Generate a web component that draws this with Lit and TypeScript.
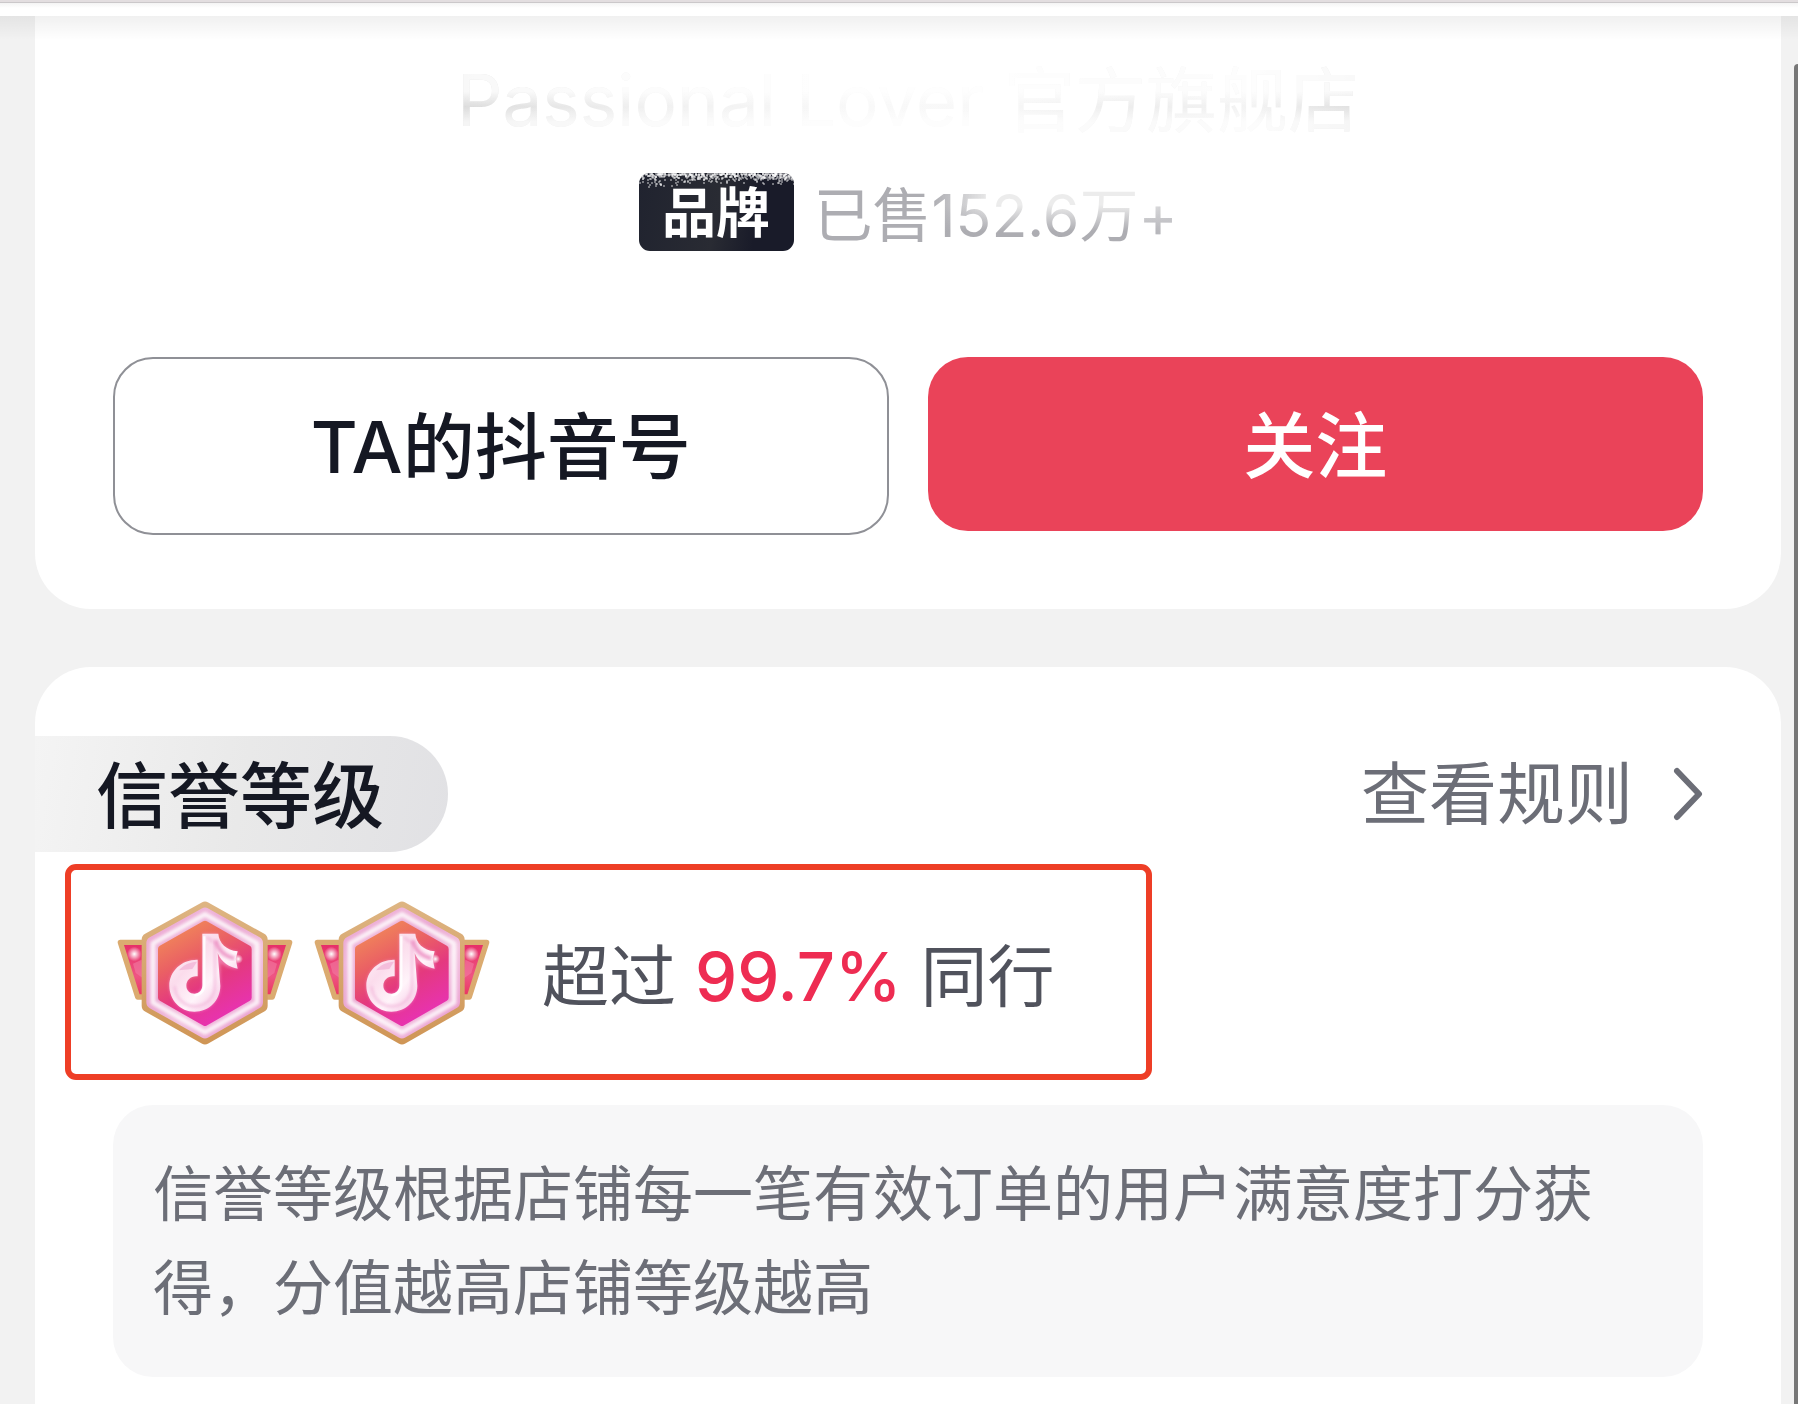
import { LitElement, html, css, svg } from "lit";
import { customElement, property } from "lit/decorators.js";

const FONT = css`Inter, "Noto Sans CJK SC", sans-serif`;

/** Winged hexagonal medal with the music note. */
@customElement("level-medal")
class LevelMedal extends LitElement {
  static styles = css`
    :host { display: block; width: 176px; height: 144px; }
    .medal { display: block; width: 100%; height: 100%; }
  `;
  render() {
    return html`<svg class="medal" viewBox="50 64 528 432" role="img" aria-label="信誉徽章">
      <defs>
        <linearGradient id="gold" gradientUnits="userSpaceOnUse" x1="0" y1="64" x2="0" y2="496">
          <stop offset="0" stop-color="#deb583" /><stop offset="1" stop-color="#cf9555" />
        </linearGradient>
        <linearGradient id="rim" gradientUnits="userSpaceOnUse" x1="150" y1="100" x2="480" y2="460">
          <stop offset="0" stop-color="#eaa2d0" /><stop offset=".22" stop-color="#efb6da" />
          <stop offset=".42" stop-color="#eaa8d2" /><stop offset=".62" stop-color="#f3c4e0" />
          <stop offset=".8" stop-color="#eeb0d8" /><stop offset="1" stop-color="#e78fc6" />
        </linearGradient>
        <linearGradient id="core" x1=".2" y1=".05" x2=".65" y2="1">
          <stop offset="0" stop-color="#f0845a" /><stop offset=".3" stop-color="#ea6064" />
          <stop offset=".6" stop-color="#e4397f" /><stop offset="1" stop-color="#e832b2" />
        </linearGradient>
        <linearGradient id="wing" x1="0" y1="0" x2="0" y2="1">
          <stop offset="0" stop-color="#e62b66" /><stop offset=".6" stop-color="#ee5583" /><stop offset="1" stop-color="#e9315c" />
        </linearGradient>
        <linearGradient id="note" x1="0" y1="0" x2="1" y2="1">
          <stop offset="0" stop-color="#ffffff" /><stop offset=".35" stop-color="#fbdcec" />
          <stop offset=".6" stop-color="#fff4fa" /><stop offset="1" stop-color="#f1a9d6" />
        </linearGradient>
        <radialGradient id="spark"><stop offset="0" stop-color="#fff" /><stop offset="1" stop-color="#fff" stop-opacity="0" /></radialGradient>
        <filter id="soft" x="-10%" y="-10%" width="120%" height="120%"><feGaussianBlur stdDeviation="4" /></filter>
      </defs>
      <g stroke-linejoin="round">
        <path d="M60 188H140V356H112Z" fill="url(#wing)" />
        <path d="M568 188H488V356H516Z" fill="url(#wing)" />
        <path d="M140 188H60L112 352H140M488 188H568L516 352H488" fill="none" stroke="#dbab70" stroke-width="16" />
        <circle cx="102" cy="223" r="22" fill="url(#spark)" />
        <circle cx="522" cy="223" r="22" fill="url(#spark)" />
        <path d="M98 252L124 240L128 296L106 280ZM530 252L504 240L500 296L522 280Z" fill="#f27fa6" opacity=".55" />
        <path d="M314 86L482 180V378L314 474L144 378V180Z" fill="url(#gold)" stroke="url(#gold)" stroke-width="40" />
        <path d="M314 104L468 190V368L314 456L158 368V190Z" fill="url(#rim)" stroke="url(#rim)" stroke-width="40" />
        <path d="M314 104L470 191V369L314 458L158 369V191Z" fill="none" stroke="#fff" stroke-width="15" opacity=".8" filter="url(#soft)" />
        <path d="M314 134L443 208V354L314 428L184 354V208Z" fill="url(#core)" stroke="url(#core)" stroke-width="22" />
        <path d="M306 162H350C356 190 378 212 412 215V267C390 267 374 260 360 249V318C360 362 326 396 282 396C240 396 207 360 207 318C207 274 244 239 292 240V290C274 287 258 300 258 318C258 332 269 342 282 342C296 342 306 332 306 316Z"
          fill="#f7a0d3" opacity=".55" filter="url(#soft)" />
        <path d="M306 162H354C356 190 378 212 412 215L406 238L412 267C390 264 362 248 352 220L360 318C360 362 326 396 282 396C240 396 207 360 207 318C207 274 244 239 292 240V290C274 287 258 300 258 318C258 332 269 342 282 342C296 342 306 332 306 316Z"
          fill="url(#note)" />
        <path d="M318 172L344 190V320C344 352 318 379 284 380C250 380 224 352 223 320" fill="none" stroke="#efa9d3" stroke-width="7" opacity=".65" filter="url(#soft)" />
        <path d="M346 182C354 214 374 230 402 236" fill="none" stroke="#e981bb" stroke-width="12" opacity=".75" filter="url(#soft)" />
        <path d="M236 272C250 254 268 248 290 246L276 268Z" fill="#f2b5d7" opacity=".8" />
        <path d="M312 170V316C312 334 298 347 282 347" fill="none" stroke="#fff" stroke-width="7" opacity=".9" />
        <circle cx="414" cy="238" r="14" fill="url(#spark)" />
      </g>
    </svg>`;
  }
}

/** Dark brand chip whose upper edge is worn away in specks. */
@customElement("brand-chip")
class BrandChip extends LitElement {
  static styles = css`
    :host { display: block; }
    .chip {
      position: relative; overflow: hidden; display: flex; align-items: center; justify-content: center;
      box-sizing: border-box; width: 155px; height: 78px; padding-top: 4px; border-radius: 11px;
      background: linear-gradient(100deg, #20232f, #292b33 50%, #191b29 75%);
      color: #fff; font: 700 54px/74px ${FONT};
    }
    .wear { position: absolute; top: 0; left: 0; width: 155px; height: 16px; }
  `;
  private specks() {
    let seed = 17;
    const rnd = () => (seed = (seed * 16807) % 2147483647) / 2147483647;
    return Array.from({ length: 560 }, () => {
      const x = Math.floor(rnd() * 155);
      const depth = x < 40 ? 16 : 11;
      const y = Math.floor(rnd() * rnd() * depth);
      return svg`<rect x=${x} y=${y} width="2" height="2" fill="#fff" opacity=".4" />`;
    });
  }
  render() {
    return html`<span class="chip"><slot></slot>
      <svg class="wear" viewBox="0 0 155 16" aria-hidden="true">${this.specks()}</svg></span>`;
  }
}

@customElement("app-root")
class AppRoot extends LitElement {
  @property() shop = "Passional Lover 官方旗舰店";
  @property() sold = "152.6万+";
  @property() rank = "99.7%";

  static styles = css`
    :host { display: block; font-family: ${FONT}; color: #151823; }
    * { box-sizing: border-box; }
    .page {
      position: relative; min-height: 100vh; display: flex; flex-direction: column;
      background: #f2f2f2; overflow: hidden;
    }
    .chrome {
      height: 16px; flex: none; border-top: 2px solid #e3dee0;
      background: linear-gradient(#cbc8ca 1px, #f4f4f4 1px, #fff 6px);
    }
    .content { flex: 1; display: flex; flex-direction: column; gap: 58px; padding: 0 17px 0 35px; }
    .shade {
      position: absolute; top: 16px; left: 0; right: 0; height: 24px; pointer-events: none;
      background: linear-gradient(rgba(0, 0, 0, .06), rgba(0, 0, 0, 0));
    }
    .thumb {
      position: absolute; top: 64px; right: 0; bottom: 0; width: 4px;
      border-radius: 4px 0 0 0; background: #777;
    }
    .card { background: #fff; }
    .profile {
      display: flex; flex-direction: column; align-items: center;
      padding: 42px 78px 74px; border-radius: 0 0 56px 56px;
    }
    .shop {
      margin: 0; font-size: 71px; line-height: 84px; font-weight: 400; white-space: nowrap; color: transparent;
      background:
        linear-gradient(rgba(255, 255, 255, .8) 40%, rgba(255, 255, 255, 0) 58%, rgba(255, 255, 255, .7) 76%),
        linear-gradient(90deg, #dcdcdc, #f0f0f0 20%, #f9f9f9 45%, #f8f8f8 60%, #ededed 75%, #f4f4f4 88%, #e0e0e0);
      -webkit-background-clip: text; background-clip: text;
    }
    .sales { display: flex; align-items: center; gap: 20px; margin-top: 31px; height: 78px; }
    .sold { margin: 0; padding-top: 8px; font-size: 59px; line-height: 78px; color: #adadb2; white-space: nowrap; }
    .faded {
      color: transparent;
      background: linear-gradient(90deg, #adadb2, rgba(173, 173, 178, 0) 24%, rgba(173, 173, 178, 0) 85%, #c4c4c8),
        linear-gradient(#ececec 35%, #adadb2 72%);
      -webkit-background-clip: text; background-clip: text;
    }
    .actions { display: grid; grid-template-columns: 1fr 1fr; gap: 39px; width: 100%; margin-top: 106px; }
    .btn {
      height: 178px; padding: 2px 0 0; border-radius: 40px; font: 500 72px/100px ${FONT};
      color: #151823; background: #fff; border: 2px solid #8f9096; cursor: pointer;
    }
    .follow { height: 174px; padding-top: 4px; color: #fff; background: #ea4359; border: 0; }
    .credit { flex: 1; padding: 69px 0 28px; border-radius: 56px 56px 0 0; }
    .head { display: flex; align-items: center; justify-content: space-between; padding-right: 78px; }
    .title {
      margin: 0; padding: 4px 64px 0 61px; height: 116px; border-radius: 0 58px 58px 0;
      font-size: 72px; line-height: 112px; font-weight: 500;
      background: linear-gradient(100deg, #f4f4f4, #e9e9e9 50%, #e1e1e4);
    }
    .rules {
      display: flex; align-items: center; gap: 40px; color: #6c6e77; text-decoration: none;
      font-size: 68px; line-height: 100px;
    }
    .chevron { display: block; width: 30px; height: 54px; }
    .level {
      display: flex; align-items: center; width: 1087px; max-width: calc(100% - 60px); height: 216px;
      margin: 12px 0 0 30px; padding: 2px 46px 0; border: 6px solid #ee3e26; border-radius: 11px;
    }
    .medals { display: flex; gap: 21px; margin-right: 52px; }
    .beat {
      display: flex; align-items: center; gap: 19px; margin: 0; padding-top: 8px;
      font-size: 67px; line-height: 100px; color: #50525c; white-space: nowrap;
    }
    .rank { color: #ee2c52; font-weight: 500; }
    .note {
      margin: 25px 78px 0; padding: 42px 40px; border-radius: 40px; background: #f7f7f8;
      font-size: 60px; line-height: 94px; color: #6c6e77;
    }
    .note-text { margin: 0; }
  `;

  render() {
    return html`<main class="page">
      <div class="chrome"></div>
      <div class="content">
        <section class="card profile">
          <h1 class="shop">${this.shop}</h1>
          <div class="sales">
            <brand-chip>品牌</brand-chip>
            <p class="sold">已售<span class="faded">${this.sold}</span></p>
          </div>
          <div class="actions">
            <button class="btn" type="button">TA的抖音号</button>
            <button class="btn follow" type="button">关注</button>
          </div>
        </section>
        <section class="card credit">
          <header class="head">
            <h2 class="title">信誉等级</h2>
            <a class="rules" href="#rules">查看规则
              <svg class="chevron" viewBox="0 0 30 54" aria-hidden="true">
                <path d="M4 4L26 27L4 50" fill="none" stroke="#6c6e77" stroke-width="6" stroke-linecap="round" stroke-linejoin="round" />
              </svg></a>
          </header>
          <div class="level">
            <div class="medals"><level-medal></level-medal><level-medal></level-medal></div>
            <p class="beat"><span>超过</span><strong class="rank">${this.rank}</strong><span>同行</span></p>
          </div>
          <div class="note"><p class="note-text">信誉等级根据店铺每一笔有效订单的用户满意度打分获得，分值越高店铺等级越高</p></div>
        </section>
      </div>
      <div class="shade"></div>
      <div class="thumb"></div>
    </main>`;
  }
}
